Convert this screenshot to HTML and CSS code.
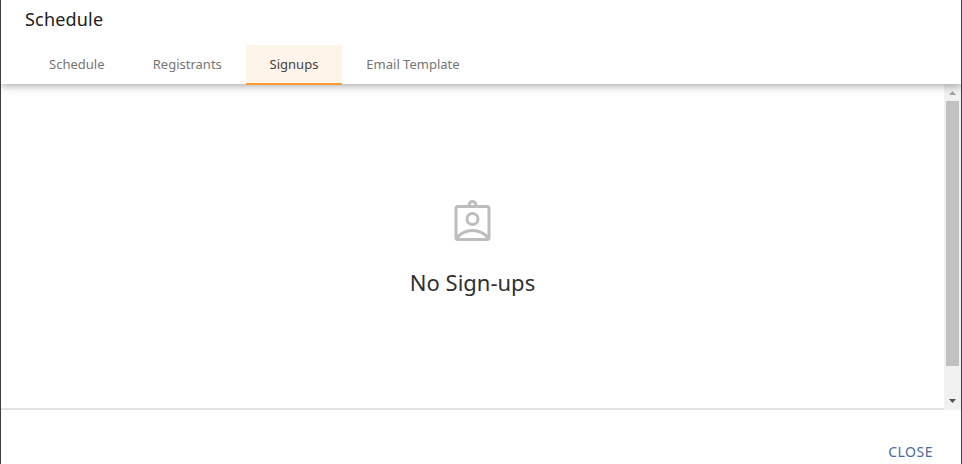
FILE: index.html
```html
<!DOCTYPE html>
<html lang="en">
<head>
<meta charset="utf-8">
<title>Schedule</title>
<link rel="stylesheet" href="styles.css">
</head>
<body>
<div class="dialog">
  <header class="header">
    <h1 class="title">Schedule</h1>
    <nav class="tabs">
      <a class="tab tab-schedule">Schedule</a>
      <a class="tab tab-registrants">Registrants</a>
      <a class="tab tab-signups active">Signups</a>
      <a class="tab tab-email">Email Template</a>
    </nav>
  </header>
  <main class="body">
    <section class="empty">
      <svg class="empty-icon" viewBox="-0.25 0 24 24" width="48" height="48" fill="none" stroke="#bdbdbd" stroke-width="1.5">
        <rect x="3.75" y="3.75" width="16.5" height="16.5" rx="1"/>
        <path d="M10.400 3.750V2.800a1.600 1.550 0 0 1 3.200 0v.95"/>
        <circle cx="12" cy="10" r="2.75"/>
        <path d="M4 19.600c2-2.300 4.800-3.800 8-3.800s6 1.500 8 3.800"/>
      </svg>
      <p class="empty-text">No Sign-ups</p>
    </section>
    <div class="scrollbar">
      <span class="arrow up"></span>
      <span class="thumb"></span>
      <span class="arrow down"></span>
    </div>
  </main>
  <footer class="footer"><button class="close">CLOSE</button></footer>
</div>
</body>
</html>
```
FILE: styles.css
```css
* { box-sizing: border-box; }
body {
  margin: 0;
  height: 464px;
  overflow: hidden;
  font-family: "Noto Sans", sans-serif;
  background: #fff;
}
.dialog {
  display: flex;
  flex-direction: column;
  height: 464px;
  border-left: 1px solid #3f3f42;
  border-right: 1px solid #3f3f42;
}
.header {
  position: relative;
  z-index: 1;
  height: 84px;
  flex: none;
  background: #fff;
  box-shadow: 0 2px 8px rgba(0, 0, 0, .34);
  clip-path: inset(0 0 -14px 0);
}
.title {
  margin: 0;
  height: 45px;
  padding: 7px 24px 0;
  font-size: 18px;
  line-height: 25px;
  font-weight: 400;
  letter-spacing: .18px;
  color: #212121;
}
.tabs { display: flex; padding-left: 24px; }
.tab {
  height: 40px;
  line-height: 39px;
  font-size: 13px;
  text-align: center;
  color: #757575;
}
.tab-schedule { width: 103.6px; }
.tab-registrants { width: 117.4px; }
.tab-signups { width: 96px; }
.tab-email { width: 142px; }
.active {
  color: #424242;
  background: #fff4ea;
  border-bottom: 2px solid #fa9a35;
}
.body { display: flex; height: 326px; flex: none; }
.empty {
  flex: 1;
  display: flex;
  flex-direction: column;
  align-items: center;
  padding-top: 115px;
  border-bottom: 2px solid #e4e4e4;
}
.empty-icon { display: block; margin-right: 1px; }
.empty-text {
  margin: 20px 0 0;
  font-size: 22px;
  line-height: 30px;
  color: #303030;
}
.scrollbar {
  width: 17px;
  display: flex;
  flex-direction: column;
  align-items: center;
  background: #f1f1f1;
}
.arrow { width: 7px; height: 4px; }
.up { margin: 7px 0 6px; background: #a3a3a3; clip-path: polygon(50% 0, 100% 100%, 0 100%); }
.thumb { width: 13px; height: 265px; background: #c1c1c1; }
.down { margin-top: 33px; background: #505050; clip-path: polygon(0 0, 100% 0, 50% 100%); }
.footer { flex: 1; display: flex; justify-content: flex-end; padding: 32px 28px 0 0; }
.close {
  border: 0;
  padding: 0;
  height: 20px;
  background: none;
  font: 14px/20px "Noto Sans", sans-serif;
  letter-spacing: .5px;
  color: #4a6b9f;
}
```
